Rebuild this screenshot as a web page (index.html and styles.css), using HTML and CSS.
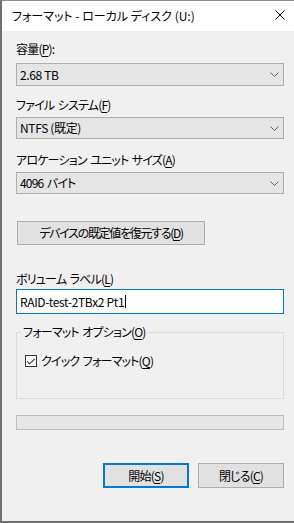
FILE: index.html
```html
<!DOCTYPE html>
<html lang="ja">
<head>
<meta charset="utf-8">
<link rel="stylesheet" href="styles.css">
</head>
<body>
<div class="window">
  <div class="titlebar">
    <span class="title">フォーマット - ローカル ディスク (U:)</span>
    <svg class="close" width="10" height="10" viewBox="0 0 10 10"><path d="M0.5 0.5 L9.5 9.5 M9.5 0.5 L0.5 9.5" stroke="#000" stroke-width="1" fill="none"/></svg>
  </div>
  <div class="content">
    <div class="label l1">容量(<u>P</u>):</div>
    <div class="select s1"><span class="latin">2.68 TB</span><svg class="chev" width="9" height="5" viewBox="0 0 9 5"><path d="M0.5 0.5 L4.5 4.5 L8.5 0.5" stroke="#606060" fill="none"/></svg></div>
    <div class="label l2">ファイル システム(<u>F</u>)</div>
    <div class="select s2"><span class="latin">NTFS (既定)</span><svg class="chev" width="9" height="5" viewBox="0 0 9 5"><path d="M0.5 0.5 L4.5 4.5 L8.5 0.5" stroke="#606060" fill="none"/></svg></div>
    <div class="label l3">アロケーション ユニット サイズ(<u>A</u>)</div>
    <div class="select s3"><span>4096 バイト</span><svg class="chev" width="9" height="5" viewBox="0 0 9 5"><path d="M0.5 0.5 L4.5 4.5 L8.5 0.5" stroke="#606060" fill="none"/></svg></div>
    <div class="btn restore">デバイスの既定値を復元する(<u>D</u>)</div>
    <div class="label l4">ボリューム ラベル(<u>L</u>)</div>
    <div class="input"><span class="latin">RAID-test-2TBx2 Pt1</span><span class="caret"></span></div>
    <div class="group">
      <span class="legend">フォーマット オプション(<u>O</u>)</span>
      <div class="check-row">
        <span class="checkbox"><svg width="11" height="11" viewBox="0 0 11 11"><path d="M1.5 5.5 L4 8 L9.5 2.5" stroke="#333" stroke-width="1.2" fill="none"/></svg></span>
        <span>クイック フォーマット(<u>Q</u>)</span>
      </div>
    </div>
    <div class="progress"></div>
    <div class="actions">
      <div class="btn action default">開始(<u>S</u>)</div>
      <div class="btn action">閉じる(<u>C</u>)</div>
    </div>
  </div>
</div>
</body>
</html>
```
FILE: styles.css
```css
html, body {
  margin: 0;
  padding: 0;
  background: #f0f0f0;
}
.window {
  width: 294px;
  height: 523px;
  box-sizing: border-box;
  border-left: 2px solid #707070;
  border-top: 1px solid #8c8c8c;
  border-bottom: 2px solid #707070;
  background: #f0f0f0;
  font-family: "Noto Sans CJK JP", sans-serif;
  font-size: 12px;
  font-feature-settings: "palt";
  color: #000;
  overflow: hidden;
}
.titlebar {
  height: 30px;
  background: #fff;
  display: flex;
  align-items: center;
  justify-content: space-between;
  padding: 0 9px 0 10px;
}
.title {
  line-height: 16px;
}
.close {
  display: block;
  margin-top: -2px;
}
.content {
  display: flex;
  flex-direction: column;
  padding: 0 10px 0 14px;
  letter-spacing: -0.8px;
  word-spacing: 1.5px;
}
.latin {
  letter-spacing: -0.35px;
  word-spacing: 0;
}
.label {
  line-height: 16px;
  height: 16px;
  white-space: nowrap;
}
u {
  text-decoration-thickness: 1px;
  text-underline-offset: 2px;
}
.l1 { margin-top: 10px; }
.l2 { margin-top: 11px; }
.l3 { margin-top: 13px; }
.l4 { margin-top: 26px; }
.select {
  box-sizing: border-box;
  height: 22px;
  border: 1px solid #adadad;
  background: #e5e5e5;
  display: flex;
  align-items: center;
  justify-content: space-between;
  padding: 0 4px 0 3px;
  line-height: 16px;
}
.s1 { margin-top: 6px; height: 23px; }
.s2 { margin-top: 4px; }
.s3 { margin-top: 4px; }
.chev { display: block; }
.btn {
  box-sizing: border-box;
  border: 1px solid #adadad;
  background: #e1e1e1;
  display: flex;
  align-items: center;
  justify-content: center;
  line-height: 16px;
  white-space: nowrap;
}
.restore {
  margin-top: 27px;
  margin-left: 1px;
  width: 188px;
  height: 24px;
  align-self: flex-start;
  letter-spacing: -1.3px;
}
.input {
  margin-top: 2px;
  height: 25px;
  box-sizing: border-box;
  border: 1px solid #0078d7;
  background: #fff;
  display: flex;
  align-items: center;
  padding-left: 3px;
  line-height: 16px;
}
.caret {
  width: 1px;
  height: 13px;
  background: #000;
  margin-left: 1px;
}
.group {
  position: relative;
  margin-top: 18px;
  height: 67px;
  box-sizing: border-box;
  border: 1px solid #dcdcdc;
  padding: 20px 0 0 8px;
}
.legend {
  position: absolute;
  top: -9px;
  left: 4px;
  padding: 0 2px 0 2px;
  background: #f0f0f0;
  line-height: 16px;
  white-space: nowrap;
}
.check-row {
  display: flex;
  align-items: center;
  gap: 4px;
  line-height: 16px;
}
.checkbox {
  box-sizing: border-box;
  width: 12px;
  height: 12px;
  border: 1px solid #333;
  background: #fff;
  display: flex;
  align-items: center;
  justify-content: center;
}
.checkbox svg { display: block; }
.progress {
  margin-top: 16px;
  height: 15px;
  box-sizing: border-box;
  border: 1px solid #bcbcbc;
  background: #e6e6e6;
}
.actions {
  margin-top: 33px;
  display: flex;
  justify-content: flex-end;
  gap: 9px;
}
.action {
  width: 86px;
  height: 25px;
}
.default {
  border: 2px solid #0078d7;
}
```
